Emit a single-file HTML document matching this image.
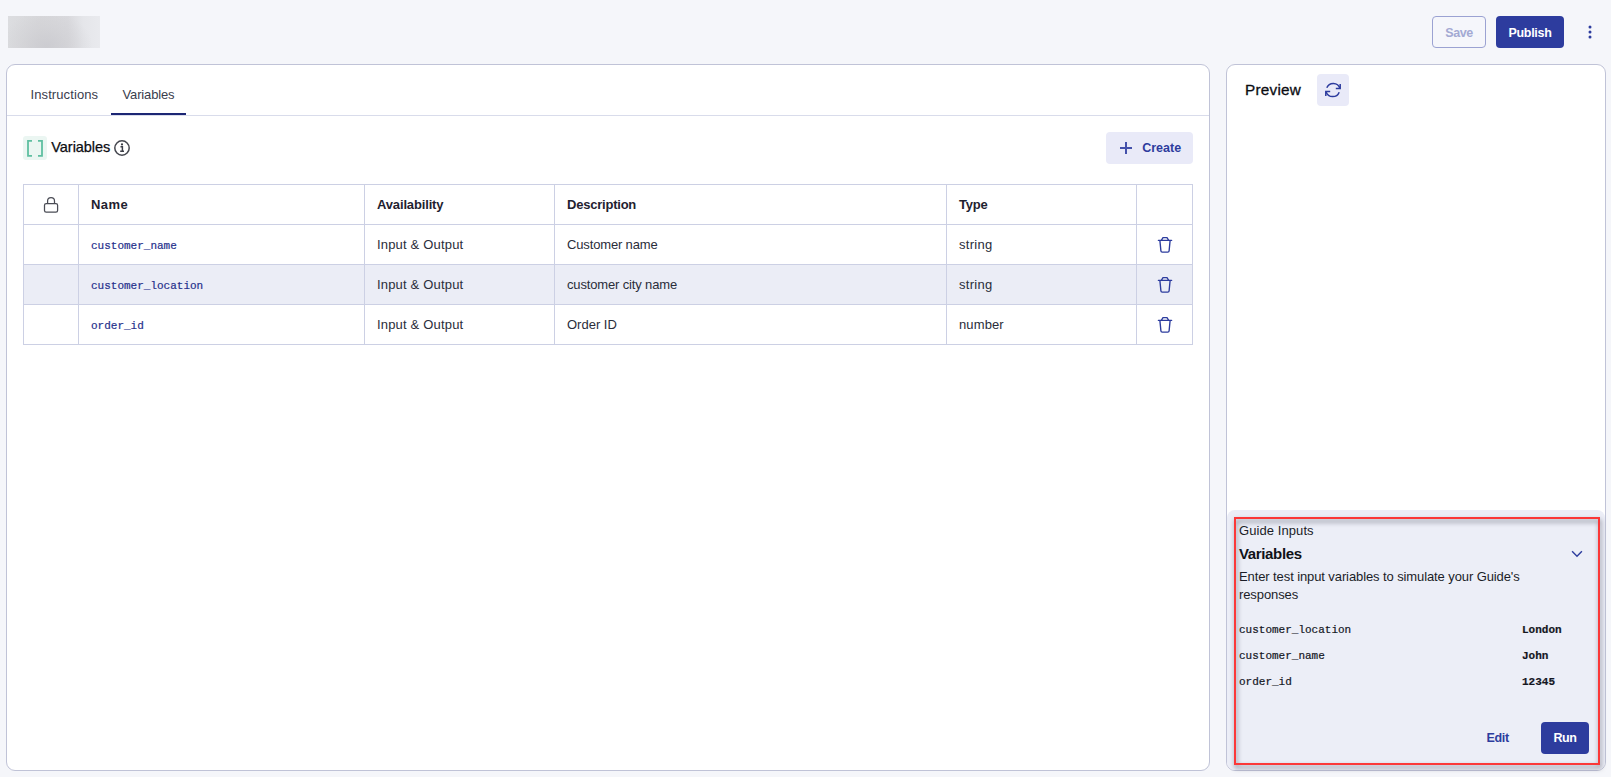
<!DOCTYPE html>
<html>
<head>
<meta charset="utf-8">
<style>
*{box-sizing:border-box;margin:0;padding:0}
html,body{width:1611px;height:777px;overflow:hidden}
body{background:#f5f6fa;font-family:"Liberation Sans",sans-serif;color:#1f2230;position:relative;font-size:13px}
.abs{position:absolute}
.t{position:absolute;white-space:nowrap;line-height:1}
.blur{left:8px;top:16px;width:92px;height:32px;background:radial-gradient(ellipse 50% 110% at 42% 95%,rgba(202,202,207,.85) 0%,rgba(206,206,210,.45) 55%,rgba(215,215,218,0) 100%),linear-gradient(90deg,#dcdde0 0%,#d7d7da 35%,#d9d9dd 65%,#e5e6ea 82%,#e9eaee 100%)}
.card{position:absolute;background:#fff;border:1px solid #c0c3d7;border-radius:9px}
#left{left:6px;top:64px;width:1204px;height:707px}
#right{left:1226px;top:64px;width:380px;height:707px}
.tabline{left:7px;top:115px;width:1202px;height:1px;background:#d9dceb}
.tabact{left:111px;top:113px;width:75px;height:2px;background:#1c2674}
.btn{position:absolute;border-radius:4px;font-weight:bold;display:flex;align-items:center;justify-content:center}
table{position:absolute;left:23px;top:184px;border-collapse:collapse;table-layout:fixed;width:1170px}
td,th{border:1px solid #ccd0e4;height:40px;padding:0 0 0 12px;text-align:left;vertical-align:middle;font-size:13px;white-space:nowrap;letter-spacing:-0.15px}
th{font-weight:bold;color:#1f2230;letter-spacing:-0.22px}
td{color:#2a2d3a}
tr.hl td{background:#ebedf6}
.mono{font-family:"Liberation Mono",monospace;color:#26308c;font-size:11px;letter-spacing:0;-webkit-text-stroke:0.2px #26308c}
.pm{font-family:"Liberation Mono",monospace;color:#14161f;font-size:11px;-webkit-text-stroke:0.2px #14161f}
</style>
</head>
<body>
<div class="abs blur"></div>

<!-- top buttons -->
<div class="btn" style="left:1432px;top:16px;width:54px;height:32px;border:1px solid #9ba2d2;color:#a3a9d3;font-size:12.5px;letter-spacing:-0.45px;padding-top:1.5px;background:#f5f6fb">Save</div>
<div class="btn" style="left:1496px;top:16px;width:68px;height:32px;background:#2d3c9e;color:#fff;font-size:12.5px;letter-spacing:-0.3px;padding-top:1.5px">Publish</div>
<svg class="abs" style="left:1586px;top:24px" width="8" height="16" viewBox="0 0 8 16"><circle cx="4" cy="3" r="1.5" fill="#2d3c9e"/><circle cx="4" cy="8" r="1.5" fill="#2d3c9e"/><circle cx="4" cy="13" r="1.5" fill="#2d3c9e"/></svg>

<!-- left card -->
<div class="card" id="left"></div>
<div class="abs tabline"></div>
<div class="abs tabact"></div>
<div class="t" id="tab1" style="left:30.5px;top:88px;font-size:13px;color:#3a3d4d;letter-spacing:0.1px">Instructions</div>
<div class="t" id="tab2" style="left:122.5px;top:88px;font-size:13px;color:#3a3d4d;letter-spacing:-0.15px">Variables</div>

<div class="abs" style="left:23px;top:136px;width:24px;height:24px;background:#ebf6f2;border-radius:3px"></div>
<svg class="abs" style="left:23px;top:136px" width="24" height="24" viewBox="0 0 24 24" fill="none" stroke="#5fbfa1" stroke-width="1.8"><path d="M9 4.8H5v15h4M15 4.8h4v15h-4"/></svg>
<div class="t" id="hvar" style="left:51.3px;top:140px;font-size:14.5px;color:#0c0d12;letter-spacing:-0.05px;-webkit-text-stroke:0.25px #0c0d12">Variables</div>
<svg class="abs" style="left:113px;top:139px" width="18" height="18" viewBox="0 0 18 18" fill="none"><circle cx="9" cy="9" r="7.2" stroke="#45474f" stroke-width="1.5"/><path d="M7.5 7.7h1.9v4.5M7.2 12.3h3.8" stroke="#3c3e47" stroke-width="1.45"/><circle cx="9" cy="5.4" r="1.1" fill="#3c3e47"/></svg>

<div class="btn" style="left:1106px;top:132px;width:87px;height:32px;background:#e9eaf8;color:#2d3c9e;font-size:12.5px;letter-spacing:0px;justify-content:flex-start"><svg style="margin-left:14px;margin-right:10.2px" width="12" height="12" viewBox="0 0 12 12" stroke="#4451ab" stroke-width="2" fill="none"><path d="M6 0v12M0 6h12"/></svg><span style="position:relative;top:0px">Create</span></div>

<table>
<colgroup><col style="width:55px"><col style="width:286px"><col style="width:190px"><col style="width:392px"><col style="width:190px"><col style="width:56px"></colgroup>
<tr><th></th><th style="letter-spacing:0.45px">Name</th><th style="letter-spacing:-0.15px">Availability</th><th>Description</th><th>Type</th><th></th></tr>
<tr><td></td><td><span class="mono">customer_name</span></td><td style="letter-spacing:0.18px">Input &amp; Output</td><td>Customer name</td><td style="letter-spacing:0.3px">string</td><td></td></tr>
<tr class="hl"><td></td><td><span class="mono">customer_location</span></td><td style="letter-spacing:0.18px">Input &amp; Output</td><td>customer city name</td><td style="letter-spacing:0.3px">string</td><td></td></tr>
<tr><td></td><td><span class="mono">order_id</span></td><td style="letter-spacing:0.18px">Input &amp; Output</td><td style="letter-spacing:0px">Order ID</td><td style="letter-spacing:0.12px">number</td><td></td></tr>
</table>

<svg class="abs" style="left:36px;top:190px" width="30" height="30" viewBox="0 0 30 30" fill="none" stroke="#4a4c55" stroke-width="1.25"><rect x="8.5" y="13.5" width="13.1" height="8.7" rx="1.7"/><path d="M11.6 13.5v-2.5a3.45 3.45 0 0 1 6.9 0v2.5"/></svg>
<svg class="abs" style="left:1150px;top:230px" width="30" height="30" viewBox="0 0 30 30" fill="none" stroke="#2d3c9e" stroke-width="1.35" stroke-linejoin="round" stroke-linecap="round"><path d="M8.4 10.4H21.6"/><path d="M11.5 10.2L13 7.6H17L18.5 10.2"/><path d="M9.9 10.6L10.9 20.9Q11 22.1 12.2 22.1H17.8Q19 22.1 19.1 20.9L20.1 10.6"/></svg>
<svg class="abs" style="left:1150px;top:270px" width="30" height="30" viewBox="0 0 30 30" fill="none" stroke="#2d3c9e" stroke-width="1.35" stroke-linejoin="round" stroke-linecap="round"><path d="M8.4 10.4H21.6"/><path d="M11.5 10.2L13 7.6H17L18.5 10.2"/><path d="M9.9 10.6L10.9 20.9Q11 22.1 12.2 22.1H17.8Q19 22.1 19.1 20.9L20.1 10.6"/></svg>
<svg class="abs" style="left:1150px;top:310px" width="30" height="30" viewBox="0 0 30 30" fill="none" stroke="#2d3c9e" stroke-width="1.35" stroke-linejoin="round" stroke-linecap="round"><path d="M8.4 10.4H21.6"/><path d="M11.5 10.2L13 7.6H17L18.5 10.2"/><path d="M9.9 10.6L10.9 20.9Q11 22.1 12.2 22.1H17.8Q19 22.1 19.1 20.9L20.1 10.6"/></svg>
<!-- right card -->
<div class="card" id="right"></div>
<div class="t" id="prev" style="left:1245px;top:82px;font-size:15.3px;color:#0c0d12;letter-spacing:0.25px;-webkit-text-stroke:0.3px #0c0d12">Preview</div>
<div class="abs" style="left:1317px;top:74px;width:32px;height:32px;background:#e9eaf8;border-radius:4px"></div>

<svg class="abs" style="left:1313px;top:70px" width="40" height="40" viewBox="0 0 40 40" fill="none" stroke="#2d3c9e" stroke-width="1.5"><path d="M13.8 17.8A7 7 0 0 1 26.9 18.2"/><path d="M27.2 14V18.5H22.8"/><path d="M26.2 22.2A7 7 0 0 1 13.1 21.9"/><path d="M12.8 26V21.5H17.2"/></svg>
<!-- guide inputs panel -->
<div class="abs" style="left:1227px;top:510px;width:378px;height:260px;background:#eceef7;border-radius:8px"></div>
<div class="abs" style="left:1234px;top:517px;width:366px;height:248px;border:2px solid #fb3838;filter:drop-shadow(1px 3px 2.5px rgba(40,44,60,.6))"></div>
<div class="t" style="left:1239px;top:524px;font-size:13px;color:#1b1d28;letter-spacing:0.08px">Guide Inputs</div>
<div class="t" style="left:1239px;top:546px;font-size:15px;font-weight:bold;color:#101218;letter-spacing:-0.35px">Variables</div>
<div class="t" style="left:1239px;top:568px;font-size:13px;color:#1b1d28;letter-spacing:-0.1px;line-height:18px;white-space:normal;width:300px">Enter test input variables to simulate your Guide's responses</div>
<div class="t pm" style="left:1239px;top:625px">customer_location</div>
<div class="t pm" style="left:1239px;top:651px">customer_name</div>
<div class="t pm" style="left:1239px;top:677px">order_id</div>
<div class="t pm" style="left:1522px;top:625px;font-weight:bold">London</div>
<div class="t pm" style="left:1522px;top:651px;font-weight:bold">John</div>
<div class="t pm" style="left:1522px;top:677px;font-weight:bold">12345</div>
<svg class="abs" style="left:1560px;top:535px" width="40" height="40" viewBox="0 0 40 40" fill="none" stroke="#2d3c9e" stroke-width="1.4"><path d="M12.1 16.2L17 21.3L21.9 16.2"/></svg>
<div class="t" style="left:1486.5px;top:732px;font-size:12.5px;letter-spacing:-0.35px;font-weight:bold;color:#2d3c9e">Edit</div>
<div class="btn" style="left:1541px;top:722px;width:48px;height:32px;background:#2d3c9e;color:#fff;font-size:12.5px;letter-spacing:-0.35px;padding-bottom:0px">Run</div>
</body>
</html>
